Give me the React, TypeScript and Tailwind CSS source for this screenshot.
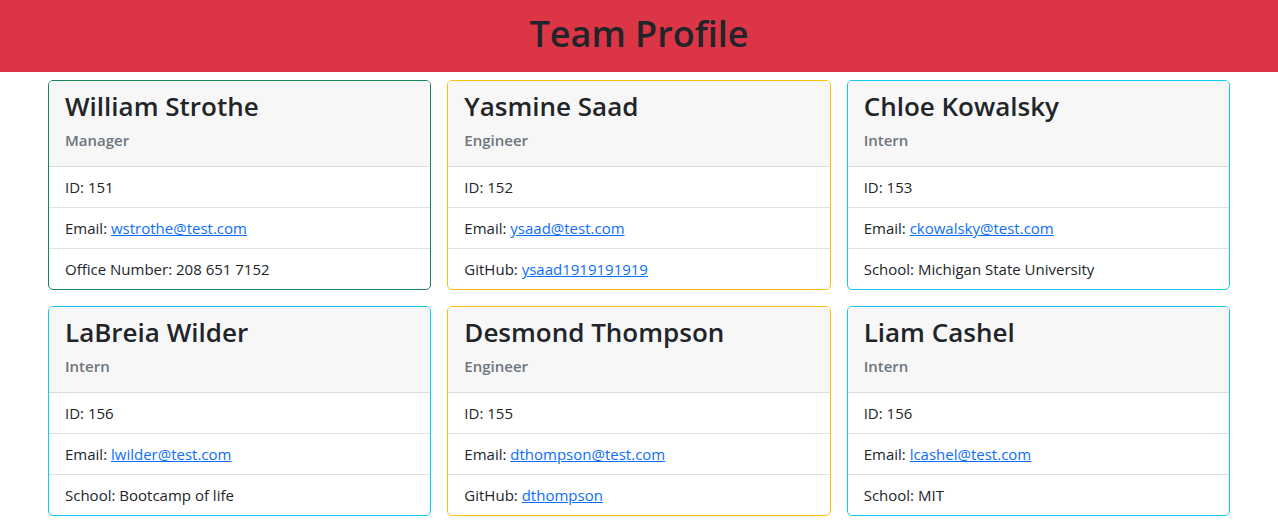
import React from 'react';

type Member = {
  name: string;
  role: string;
  id: number;
  email: string;
  extra: { label: string; value: string; link?: boolean };
  border: string;
};

const team: Member[] = [
  { name: 'William Strothe', role: 'Manager', id: 151, email: 'wstrothe@test.com', extra: { label: 'Office Number', value: '208 651 7152' }, border: 'border-[#198754]' },
  { name: 'Yasmine Saad', role: 'Engineer', id: 152, email: 'ysaad@test.com', extra: { label: 'GitHub', value: 'ysaad1919191919', link: true }, border: 'border-[#ffc107]' },
  { name: 'Chloe Kowalsky', role: 'Intern', id: 153, email: 'ckowalsky@test.com', extra: { label: 'School', value: 'Michigan State University' }, border: 'border-[#0dcaf0]' },
  { name: 'LaBreia Wilder', role: 'Intern', id: 156, email: 'lwilder@test.com', extra: { label: 'School', value: 'Bootcamp of life' }, border: 'border-[#0dcaf0]' },
  { name: 'Desmond Thompson', role: 'Engineer', id: 155, email: 'dthompson@test.com', extra: { label: 'GitHub', value: 'dthompson', link: true }, border: 'border-[#ffc107]' },
  { name: 'Liam Cashel', role: 'Intern', id: 156, email: 'lcashel@test.com', extra: { label: 'School', value: 'MIT' }, border: 'border-[#0dcaf0]' },
];

const Card = ({ m }: { m: Member }) => (
  <div className={`border ${m.border} rounded-[5px] overflow-hidden bg-white`}>
    <div className="bg-[#f7f7f7] px-4 pt-2 pb-2 border-b border-[#dcdcdc]">
      <h3 className="text-[26px] leading-[34px] font-semibold text-[#212529] mb-2">{m.name}</h3>
      <h6 className="text-[15px] leading-[19px] font-semibold text-[#6c757d] mb-2">{m.role}</h6>
    </div>
    <ul className="text-[15px] leading-6 text-[#212529]">
      <li className="px-4 py-2 border-b border-[#dee2e6]">ID: {m.id}</li>
      <li className="px-4 py-2 border-b border-[#dee2e6]">
        Email: <a href={`mailto:${m.email}`} className="text-[#0d6efd] underline">{m.email}</a>
      </li>
      <li className="px-4 py-2">
        {m.extra.label}:{' '}
        {m.extra.link ? (
          <a href="#" className="text-[#0d6efd] underline">{m.extra.value}</a>
        ) : (
          m.extra.value
        )}
      </li>
    </ul>
  </div>
);

export default function App() {
  return (
    <div className="min-h-screen bg-white font-['Open_Sans',sans-serif]">
      <header className="bg-[#dc3545] h-[72px] flex items-center justify-center">
        <h1 className="text-[36px] font-semibold text-[#212529] leading-none -mt-[4px]">Team Profile</h1>
      </header>
      <main className="w-[1182px] mx-auto grid grid-cols-3 gap-4 pt-2">
        {team.map((m, i) => (
          <Card key={i} m={m} />
        ))}
      </main>
    </div>
  );
}
